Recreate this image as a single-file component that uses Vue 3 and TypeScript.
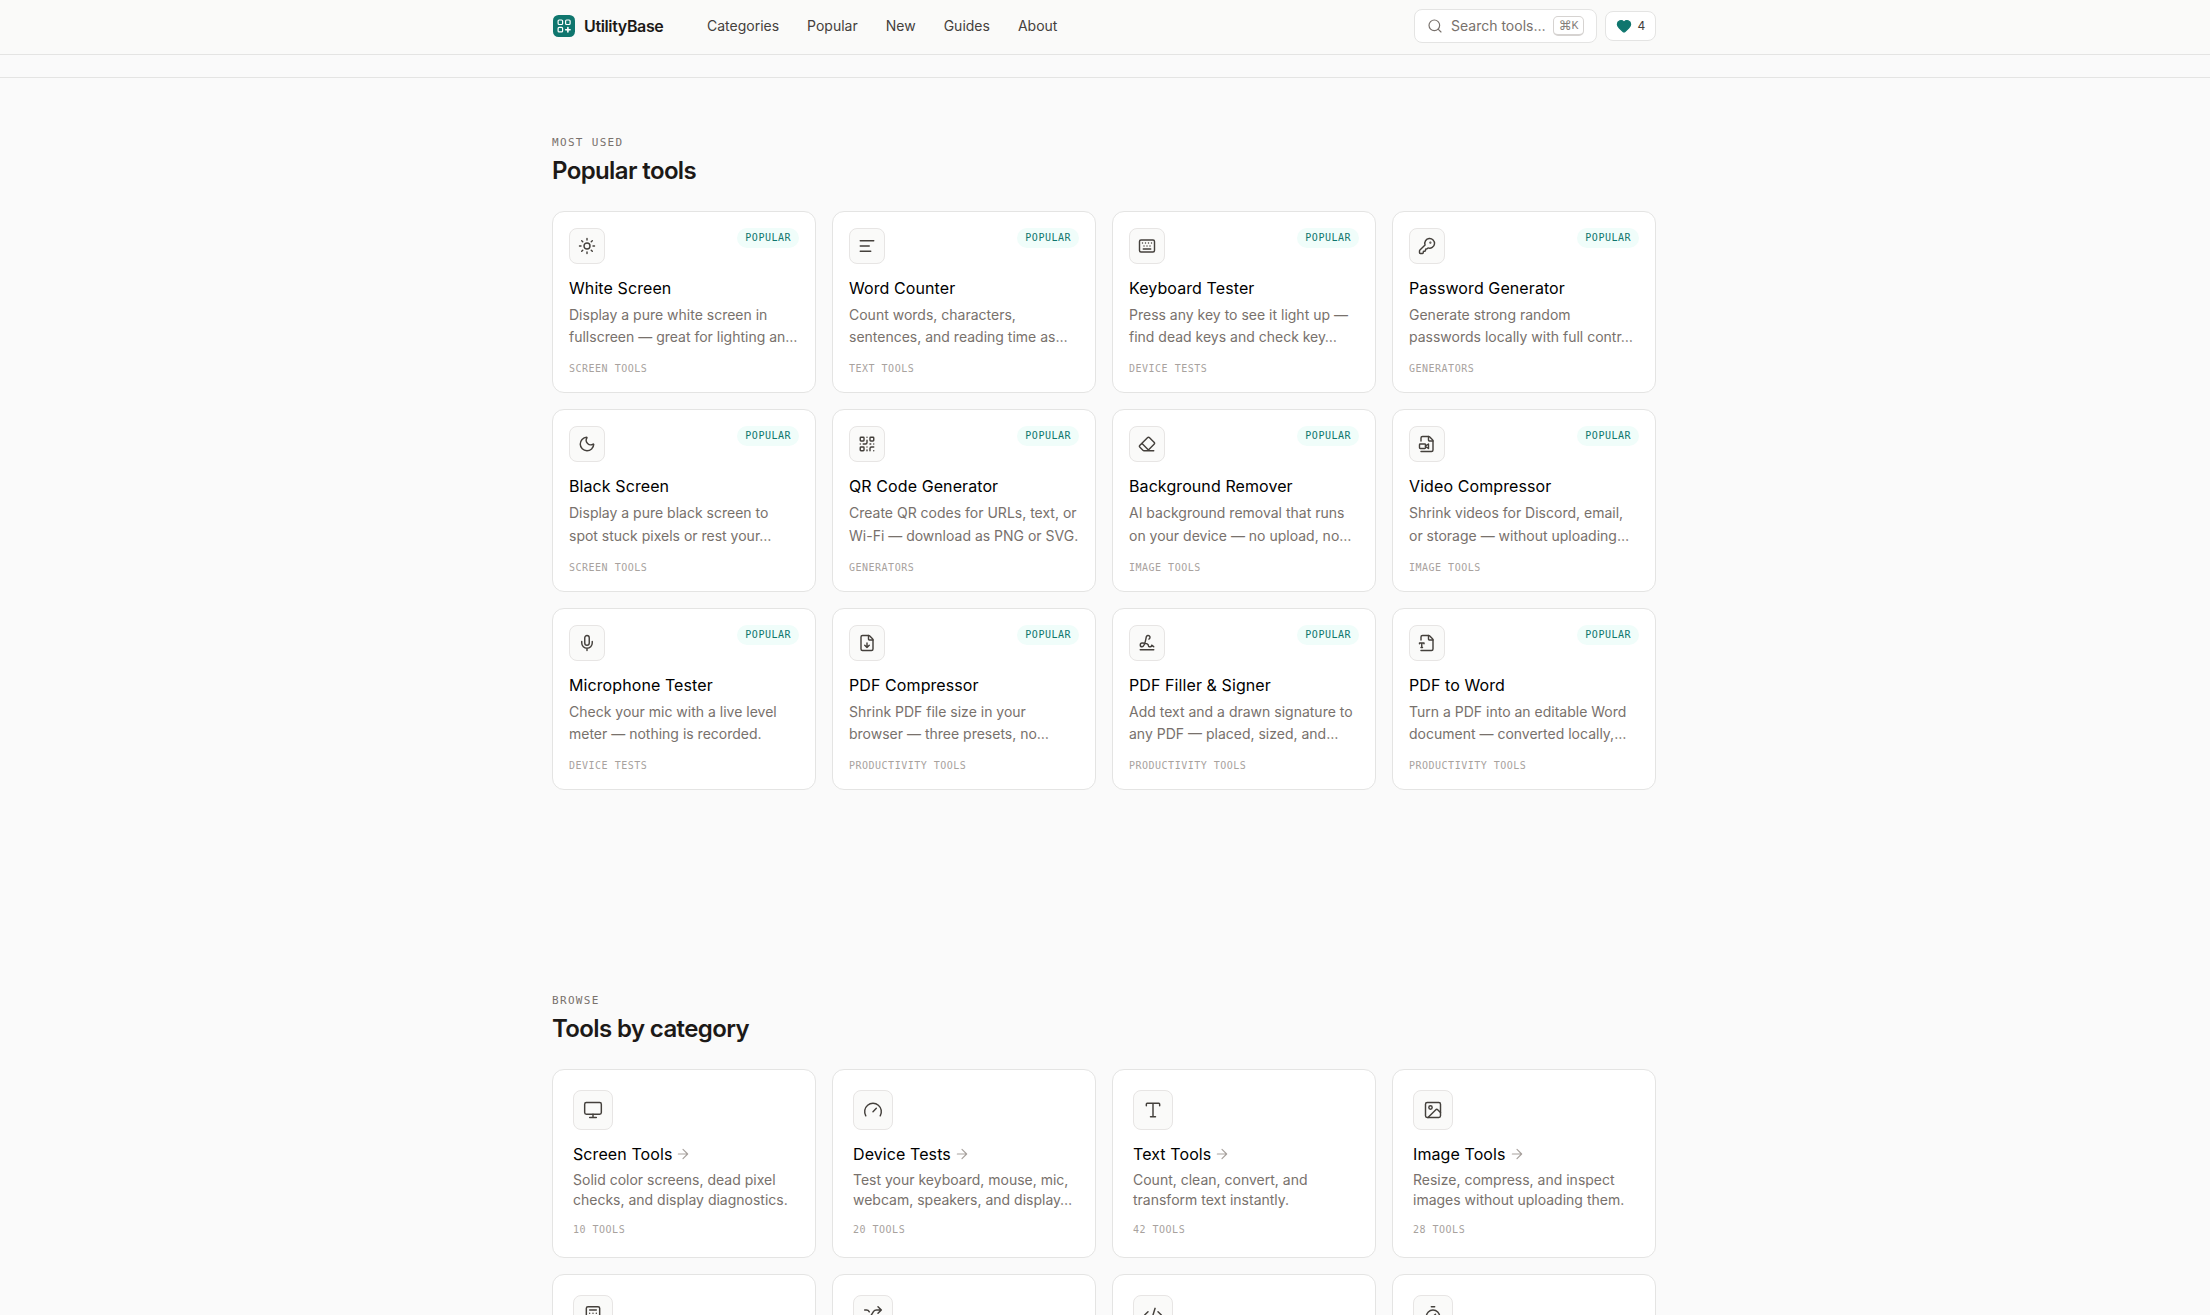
<script setup lang="ts">
interface Tool { icon: string; name: string; lines: string[]; tag: string }
interface Category { icon: string; name: string; lines: string[]; count: number }

const nav: string[] = ['Categories', 'Popular', 'New', 'Guides', 'About']

const icons: Record<string, string> = {
  sun: '<circle cx="12" cy="12" r="4"/><path d="M12 2v2M12 20v2M4.93 4.93l1.41 1.41M17.66 17.66l1.41 1.41M2 12h2M20 12h2M6.34 17.66l-1.41 1.41M19.07 4.93l-1.41 1.41"/>',
  lines: '<path d="M21 5H3M15 12H3M17 19H3"/>',
  keyboard: '<path d="M10 8h.01M12 12h.01M14 8h.01M16 12h.01M18 8h.01M6 8h.01M7 16h10M8 12h.01"/><rect width="20" height="16" x="2" y="4" rx="2"/>',
  key: '<path d="M2.586 17.414A2 2 0 0 0 2 18.828V21a1 1 0 0 0 1 1h3a1 1 0 0 0 1-1v-1a1 1 0 0 1 1-1h1a1 1 0 0 0 1-1v-1a1 1 0 0 1 1-1h.172a2 2 0 0 0 1.414-.586l.814-.814a6.5 6.5 0 1 0-4-4z"/><circle cx="16.5" cy="7.5" r=".5" fill="currentColor"/>',
  moon: '<path d="M20.985 12.486a9 9 0 1 1-9.473-9.472c.405-.022.617.46.402.803a6 6 0 0 0 8.268 8.268c.344-.215.825-.004.803.401"/>',
  qr: '<rect width="5" height="5" x="3" y="3" rx="1"/><rect width="5" height="5" x="16" y="3" rx="1"/><rect width="5" height="5" x="3" y="16" rx="1"/><path d="M21 16h-3a2 2 0 0 0-2 2v3M21 21v.01M12 7v3a2 2 0 0 1-2 2H7M3 12h.01M12 3h.01M12 16v.01M16 12h1M21 12v.01M12 21v-1"/>',
  eraser: '<path d="M21 21H8a2 2 0 0 1-1.42-.587l-3.994-3.999a2 2 0 0 1 0-2.828l10-10a2 2 0 0 1 2.829 0l5.999 6a2 2 0 0 1 0 2.828L12.834 21M5.082 11.09l8.828 8.828"/>',
  video: '<path d="M4 8V4a2 2 0 0 1 2-2h8a2.4 2.4 0 0 1 1.706.706l3.588 3.588A2.4 2.4 0 0 1 20 8v12a2 2 0 0 1-2 2H4"/><path d="M14 2v5a1 1 0 0 0 1 1h5"/><path d="m10 15.5 4 2.5v-6l-4 2.5"/><rect width="8" height="6" x="2" y="12" rx="1"/>',
  mic: '<path d="M12 19v3M19 10v2a7 7 0 0 1-14 0v-2"/><rect x="9" y="2" width="6" height="13" rx="3"/>',
  fileDown: '<path d="M6 22a2 2 0 0 1-2-2V4a2 2 0 0 1 2-2h8a2.4 2.4 0 0 1 1.704.706l3.588 3.588A2.4 2.4 0 0 1 20 8v12a2 2 0 0 1-2 2z"/><path d="M14 2v5a1 1 0 0 0 1 1h5M12 18v-6M9 15l3 3 3-3"/>',
  signature: '<path d="m21 17-2.156-1.868A.5.5 0 0 0 18 15.5v.5a1 1 0 0 1-1 1h-2a1 1 0 0 1-1-1c0-2.545-3.991-3.97-8.5-4a1 1 0 0 0 0 5c4.153 0 4.745-11.295 5.708-13.5a2.5 2.5 0 1 1 3.31 3.284"/><path d="M3 21h18"/>',
  fileType: '<path d="M4 8V4a2 2 0 0 1 2-2h8a2.4 2.4 0 0 1 1.706.706l3.588 3.588A2.4 2.4 0 0 1 20 8v12a2 2 0 0 1-2 2H4"/><path d="M14 2v5a1 1 0 0 0 1 1h5M2 13v-1h6v1M5 12v6M4 18h2"/>',
  monitor: '<rect width="20" height="14" x="2" y="3" rx="2"/><path d="M8 21h8M12 17v4"/>',
  gauge: '<path d="m12 14 4-4M3.34 19a10 10 0 1 1 17.32 0"/>',
  type: '<path d="M12 4v16M4 7V5a1 1 0 0 1 1-1h14a1 1 0 0 1 1 1v2M9 20h6"/>',
  image: '<rect width="18" height="18" x="3" y="3" rx="2"/><circle cx="9" cy="9" r="2"/><path d="m21 15-3.086-3.086a2 2 0 0 0-2.828 0L6 21"/>',
  calculator: '<rect width="16" height="20" x="4" y="2" rx="2"/><path d="M8 6h8M16 14v4M16 10h.01M12 10h.01M8 10h.01M12 14h.01M8 14h.01M12 18h.01M8 18h.01"/>',
  shuffle: '<path d="m18 14 4 4-4 4M18 2l4 4-4 4M2 18h1.973a4 4 0 0 0 3.3-1.7l5.454-8.6a4 4 0 0 1 3.3-1.7H22M2 6h1.972a4 4 0 0 1 3.6 2.2M22 18h-6.041a4 4 0 0 1-3.3-1.8l-.359-.45"/>',
  code: '<path d="m18 16 4-4-4-4M6 8l-4 4 4 4M14.5 4l-5 16"/>',
  timer: '<path d="M10 2h4M12 14l3-3"/><circle cx="12" cy="14" r="8"/>',
}

const tools: Tool[] = [
  { icon: 'sun', name: 'White Screen', lines: ['Display a pure white screen in', 'fullscreen — great for lighting an…'], tag: 'Screen Tools' },
  { icon: 'lines', name: 'Word Counter', lines: ['Count words, characters,', 'sentences, and reading time as…'], tag: 'Text Tools' },
  { icon: 'keyboard', name: 'Keyboard Tester', lines: ['Press any key to see it light up —', 'find dead keys and check key…'], tag: 'Device Tests' },
  { icon: 'key', name: 'Password Generator', lines: ['Generate strong random', 'passwords locally with full contr…'], tag: 'Generators' },
  { icon: 'moon', name: 'Black Screen', lines: ['Display a pure black screen to', 'spot stuck pixels or rest your…'], tag: 'Screen Tools' },
  { icon: 'qr', name: 'QR Code Generator', lines: ['Create QR codes for URLs, text, or', 'Wi-Fi — download as PNG or SVG.'], tag: 'Generators' },
  { icon: 'eraser', name: 'Background Remover', lines: ['AI background removal that runs', 'on your device — no upload, no…'], tag: 'Image Tools' },
  { icon: 'video', name: 'Video Compressor', lines: ['Shrink videos for Discord, email,', 'or storage — without uploading…'], tag: 'Image Tools' },
  { icon: 'mic', name: 'Microphone Tester', lines: ['Check your mic with a live level', 'meter — nothing is recorded.'], tag: 'Device Tests' },
  { icon: 'fileDown', name: 'PDF Compressor', lines: ['Shrink PDF file size in your', 'browser — three presets, no…'], tag: 'Productivity Tools' },
  { icon: 'signature', name: 'PDF Filler & Signer', lines: ['Add text and a drawn signature to', 'any PDF — placed, sized, and…'], tag: 'Productivity Tools' },
  { icon: 'fileType', name: 'PDF to Word', lines: ['Turn a PDF into an editable Word', 'document — converted locally,…'], tag: 'Productivity Tools' },
]

const categories: Category[] = [
  { icon: 'monitor', name: 'Screen Tools', lines: ['Solid color screens, dead pixel', 'checks, and display diagnostics.'], count: 10 },
  { icon: 'gauge', name: 'Device Tests', lines: ['Test your keyboard, mouse, mic,', 'webcam, speakers, and display…'], count: 20 },
  { icon: 'type', name: 'Text Tools', lines: ['Count, clean, convert, and', 'transform text instantly.'], count: 42 },
  { icon: 'image', name: 'Image Tools', lines: ['Resize, compress, and inspect', 'images without uploading them.'], count: 28 },
]
const moreIcons: string[] = ['calculator', 'shuffle', 'code', 'timer']
</script>

<template>
  <div class="page">
    <header class="header">
      <div class="wrap bar">
        <svg class="logo" viewBox="0 0 22 22">
          <rect width="22" height="22" rx="5.5" fill="#0f766e" stroke="none" />
          <rect x="5.1" y="5" width="4.5" height="4.5" rx="1" />
          <rect x="12.6" y="5" width="4.5" height="4.5" rx="1" />
          <rect x="5.1" y="12.4" width="4.5" height="4.5" rx="1" />
          <path d="M14.9 12.5v4.4M12.7 14.7h4.4" stroke-width="1.6" />
        </svg>
        <span class="brand">UtilityBase</span>
        <nav class="nav"><a v-for="n in nav" :key="n">{{ n }}</a></nav>
        <div class="search">
          <svg class="glass" viewBox="0 0 24 24"><circle cx="11" cy="11" r="8" /><path d="m21 21-4.34-4.34" /></svg>
          <span class="placeholder">Search tools…</span>
          <kbd><span class="cmd">⌘</span>K</kbd>
        </div>
        <div class="fav">
          <svg class="heart" viewBox="0 0 24 24"><path d="M2 9.5a5.5 5.5 0 0 1 9.591-3.676.56.56 0 0 0 .818 0A5.49 5.49 0 0 1 22 9.5c0 2.29-1.5 4-3 5.5l-5.492 5.313a2 2 0 0 1-3 .019L5 15c-1.5-1.5-3-3.2-3-5.5" /></svg>
          <span>4</span>
        </div>
      </div>
    </header>
    <div class="strip"></div>

    <main class="wrap">
      <section class="popular">
        <p class="eyebrow">Most used</p>
        <h2>Popular tools</h2>
        <div class="grid">
          <article v-for="t in tools" :key="t.name" class="card tool">
            <div class="top">
              <div class="tile"><svg viewBox="0 0 24 24" v-html="icons[t.icon]"></svg></div>
              <span class="badge">Popular</span>
            </div>
            <h3>{{ t.name }}</h3>
            <p class="desc"><span v-for="l in t.lines" :key="l">{{ l }}</span></p>
            <p class="meta">{{ t.tag }}</p>
          </article>
        </div>
      </section>

      <section class="browse">
        <p class="eyebrow">Browse</p>
        <h2>Tools by category</h2>
        <div class="grid">
          <article v-for="c in categories" :key="c.name" class="card cat">
            <div class="tile"><svg viewBox="0 0 24 24" v-html="icons[c.icon]"></svg></div>
            <h3>{{ c.name }}<svg class="arrow" viewBox="0 0 24 24"><path d="M5 12h14M12 5l7 7-7 7" /></svg></h3>
            <p class="desc"><span v-for="l in c.lines" :key="l">{{ l }}</span></p>
            <p class="meta">{{ c.count }} tools</p>
          </article>
          <article v-for="m in moreIcons" :key="m" class="card cat">
            <div class="tile"><svg viewBox="0 0 24 24" v-html="icons[m]"></svg></div>
          </article>
        </div>
      </section>
    </main>
  </div>
</template>

<style>
html, body { background: #fafafa; overflow: hidden; }
</style>

<style scoped>
.page { height: 1315px; overflow: hidden; background: #fafafa; color: #0c0a09; font-family: Inter, "Liberation Sans", sans-serif; }
.page * { box-sizing: border-box; }
svg { display: block; fill: none; stroke: currentColor; stroke-width: 1.75; stroke-linecap: round; stroke-linejoin: round; flex: none; }
.wrap { width: 1104px; margin: 0 0 0 552px; }
.header { height: 55px; border-bottom: 1px solid #e4e4e3; background: #fafaf9; }
.bar { height: 52px; display: flex; align-items: center; }
.logo { width: 22px; height: 22px; margin-left: 1px; stroke: #fff; stroke-width: 1.2; }
.brand { margin-left: 9px; width: 80px; font-size: 16px; font-weight: 600; letter-spacing: -0.36px; color: #1c1917; white-space: nowrap; }
.nav { display: flex; gap: 28px; margin-left: 43px; padding-bottom: 1px; font-size: 14px; color: #44403c; }
.search { margin-left: auto; width: 183px; height: 34px; padding: 0 12px 1px 12px; border: 1px solid #e4e4e3; border-radius: 8px; background: #fff; display: flex; align-items: center; font-size: 14px; color: #78716c; white-space: nowrap; }
.glass { width: 16px; height: 16px; margin-right: 8px; }
.placeholder { width: 94px; }
kbd { margin-left: 8px; width: 31px; height: 20px; border: 1px solid #d6d3d1; border-bottom-width: 2px; border-radius: 5px; font: 11px/17px Roboto, sans-serif; color: #85807b; display: flex; justify-content: center; align-items: center; flex: none; }
.cmd { font: 13px/17px "DejaVu Sans", sans-serif; }
.fav { margin-left: 8px; width: 51px; height: 30px; border: 1px solid #e4e4e3; border-radius: 8px; background: #fff; display: flex; align-items: center; justify-content: center; gap: 6px; font: 12px/1 Inter, sans-serif; color: #44403c; }
.heart { width: 16px; height: 16px; fill: #0f766e; stroke: #0f766e; }
.strip { height: 23px; border-bottom: 1px solid #e4e4e3; }
p, h2, h3 { margin: 0; }
.popular { padding-top: 57px; }
.browse { padding-top: 202.8px; }
.eyebrow { font: 11px/16px "DejaVu Sans Mono", monospace; letter-spacing: 1.32px; text-transform: uppercase; color: #78716c; }
h2 { margin-top: 3px; font-size: 24px; line-height: 34px; font-weight: 600; letter-spacing: -0.62px; color: #1c1917; }
.grid { display: grid; grid-template-columns: repeat(4, 264px); gap: 16px; margin-top: 23px; }
.card { border: 1px solid #e4e4e3; border-radius: 12px; background: #fff; }
.tool { height: 182.4px; padding: 16px; }
.cat { height: 189px; padding: 20px; }
.top { display: flex; justify-content: space-between; align-items: flex-start; }
.tile { width: 36px; height: 36px; border: 1px solid #e7e5e4; border-radius: 8px; background: #fafaf9; display: flex; align-items: center; justify-content: center; color: #44403c; }
.tile svg { width: 18px; height: 18px; stroke-width: 1.9; }
.cat .tile { width: 40px; height: 40px; }
.cat .tile svg { width: 20px; height: 20px; stroke-width: 1.75; }
.badge { height: 20px; padding: 0 8px; border-radius: 10px; background: #f0fdfa; color: #0f766e; font: 10px/20px "DejaVu Sans Mono", monospace; letter-spacing: 0.5px; text-transform: uppercase; }
h3 { display: flex; align-items: center; margin-top: 12px; font-size: 16px; line-height: 24px; font-weight: 400; letter-spacing: 0.09px; color: #000; white-space: nowrap; }
.desc { margin-top: 4px; font-size: 14px; line-height: 22.4px; color: #78716c; }
.desc span { display: block; white-space: nowrap; }
.meta { margin-top: 12.4px; font: 10px/15px "DejaVu Sans Mono", monospace; letter-spacing: 0.5px; text-transform: uppercase; color: #a8a29e; }
.cat .desc { line-height: 20px; }
.arrow { width: 16px; height: 16px; margin-left: 3px; color: #a8a29e; }
</style>
